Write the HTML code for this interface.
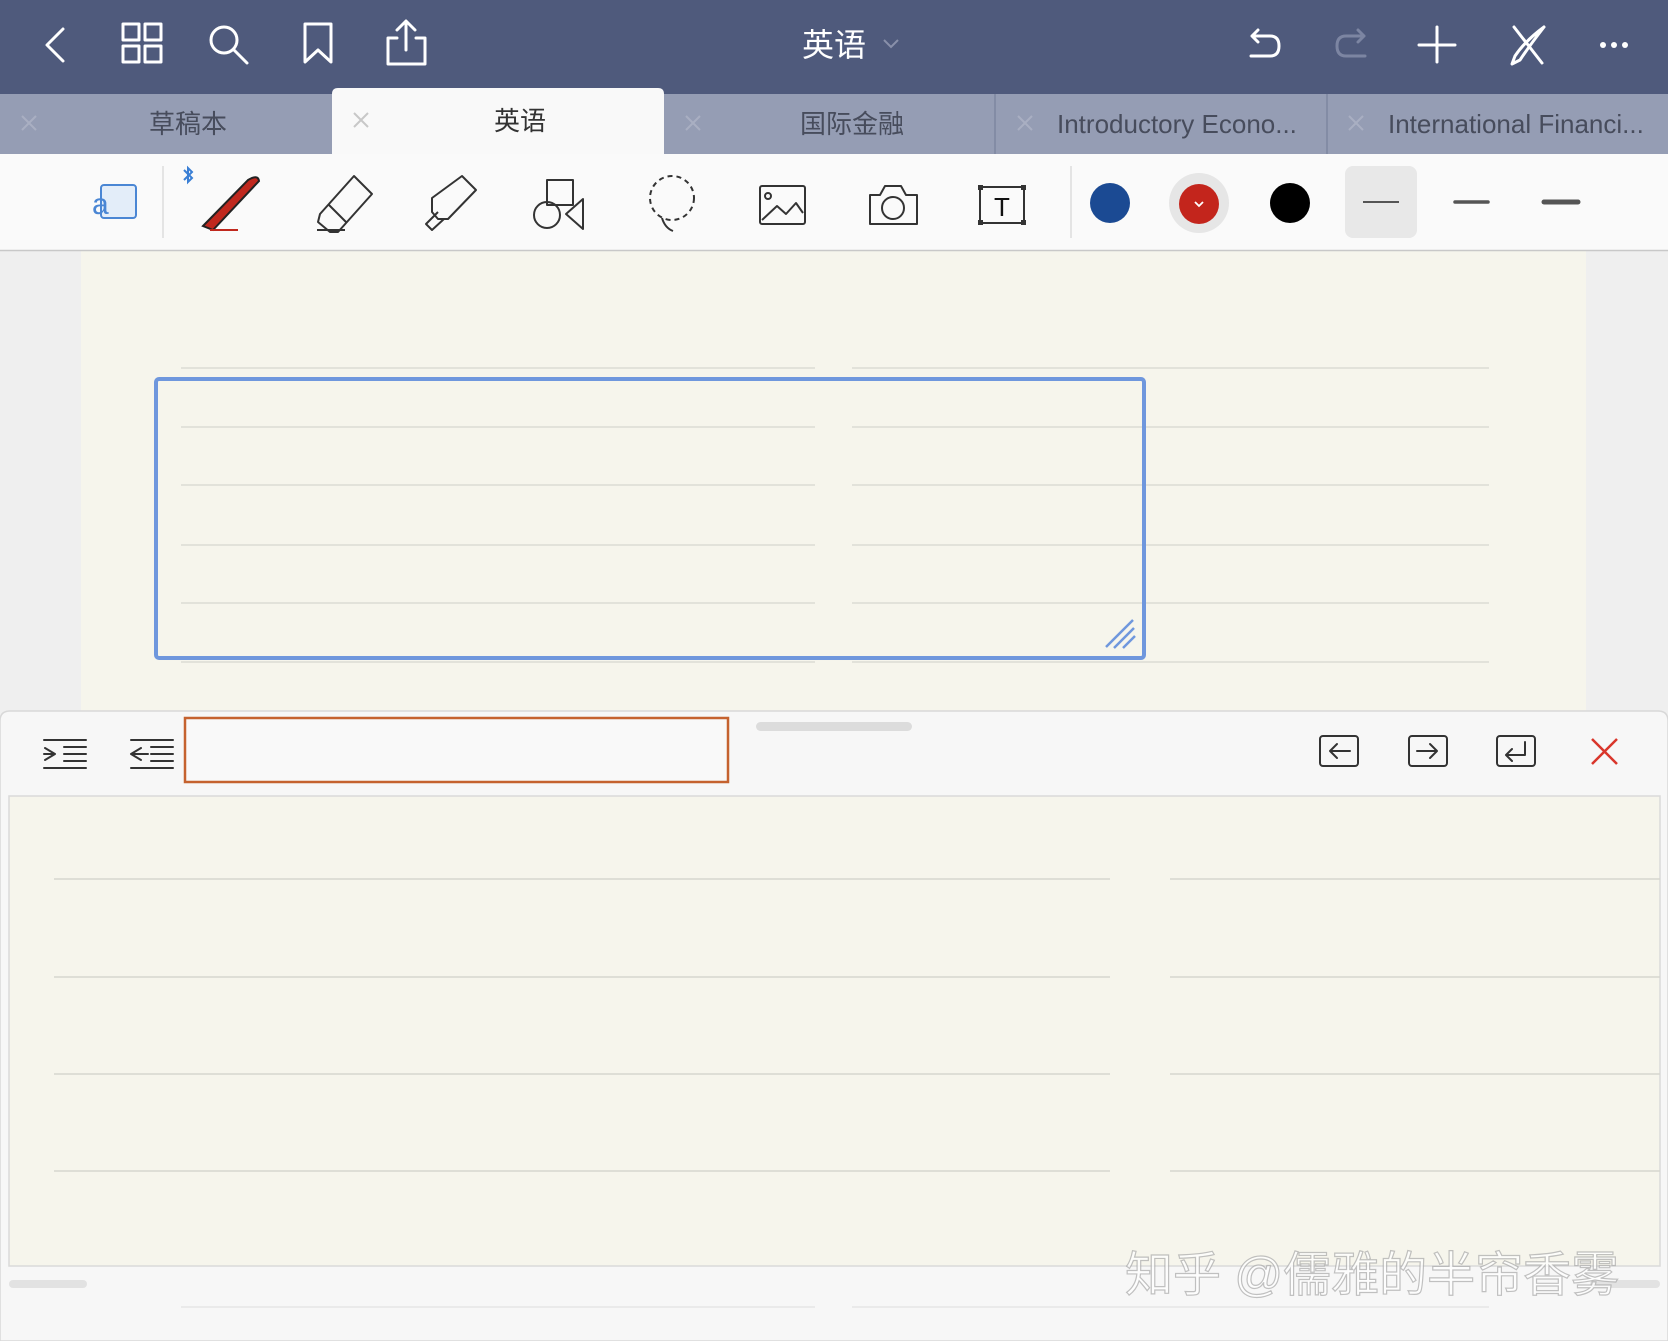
<!DOCTYPE html>
<html><head><meta charset="utf-8"><style>
body{margin:0;width:1668px;height:1341px;overflow:hidden;background:#efefef;font-family:"Liberation Sans","Noto Sans CJK SC",sans-serif}
svg{position:absolute;left:0;top:0}
</style></head><body>
<svg width="1668" height="1341" viewBox="0 0 1668 1341" xmlns="http://www.w3.org/2000/svg" font-family="Liberation Sans, Noto Sans CJK SC, sans-serif">
<rect x="0" y="251" width="1668" height="1090" fill="#efefef"/>
<rect x="81" y="251" width="1505" height="470" fill="#f6f5ec"/>
<g stroke="#dcdcd4" stroke-width="1.5">
<line x1="181" y1="368" x2="815" y2="368"/><line x1="852" y1="368" x2="1489" y2="368"/>
<line x1="181" y1="427" x2="815" y2="427"/><line x1="852" y1="427" x2="1489" y2="427"/>
<line x1="181" y1="485" x2="815" y2="485"/><line x1="852" y1="485" x2="1489" y2="485"/>
<line x1="181" y1="545" x2="815" y2="545"/><line x1="852" y1="545" x2="1489" y2="545"/>
<line x1="181" y1="603" x2="815" y2="603"/><line x1="852" y1="603" x2="1489" y2="603"/>
<line x1="181" y1="662" x2="815" y2="662"/><line x1="852" y1="662" x2="1489" y2="662"/>
</g>
<rect x="156" y="379" width="988" height="279" rx="3" fill="none" stroke="#6f97dd" stroke-width="4"/>
<g stroke="#6f97dd" stroke-width="2.5"><line x1="1106" y1="647" x2="1133" y2="620"/><line x1="1114" y1="648" x2="1134" y2="628"/><line x1="1123" y1="648" x2="1135" y2="636"/></g>

<rect x="0" y="0" width="1668" height="94" fill="#4f5a7c"/>
<g fill="none" stroke="#fff" stroke-width="3" stroke-linecap="round" stroke-linejoin="round">
<path d="M63 29 L47 45 L63 61"/>
<rect x="123" y="24" width="16" height="16"/><rect x="145" y="24" width="16" height="16"/><rect x="123" y="46" width="16" height="16"/><rect x="145" y="46" width="16" height="16"/>
<circle cx="224" cy="40" r="13"/><line x1="234" y1="50" x2="247" y2="63"/>
<path d="M305 24 H331 V62 L318 50 L305 62 Z"/>
<path d="M397 38 H388 V64 H425 V38 H416 M406 22 V50 M397 30 L406 21 L415 30"/>
<path d="M1252 36 H1270 Q1279 36 1279 46 Q1279 56 1270 56 H1251 M1258 30 L1252 36 L1258 42"/>
<path d="M1437 27 V62 M1419 45 H1455"/>
<path d="M1514 27 L1542 63 M1544 27 Q1530 45 1520 60 L1512 64 L1515 56 Q1525 41 1544 27"/>
</g>
<path d="M1364 36 H1346 Q1337 36 1337 46 Q1337 56 1346 56 H1365 M1358 30 L1364 36 L1358 42" fill="none" stroke="#7c85a2" stroke-width="3" stroke-linecap="round" stroke-linejoin="round"/>
<g fill="#fff"><circle cx="1603" cy="45" r="3"/><circle cx="1614" cy="45" r="3"/><circle cx="1625" cy="45" r="3"/></g>
<text x="834" y="56" font-size="32" fill="#fff" text-anchor="middle">英语</text>
<path d="M884 40 L891 47 L898 40" fill="none" stroke="#8990aa" stroke-width="2"/>

<rect x="0" y="94" width="1668" height="60" fill="#959db4"/>
<line x1="995" y1="94" x2="995" y2="154" stroke="#7d86a0" stroke-width="1.5"/>
<line x1="1327" y1="94" x2="1327" y2="154" stroke="#7d86a0" stroke-width="1.5"/>
<path d="M332 154 V94 Q332 88 338 88 H658 Q664 88 664 94 V154 Z" fill="#f9f9f9"/>
<g stroke="#a9afc2" stroke-width="2"><path d="M22 116 L36 130 M36 116 L22 130"/><path d="M686 116 L700 130 M700 116 L686 130"/><path d="M1018 116 L1032 130 M1032 116 L1018 130"/><path d="M1349 116 L1363 130 M1363 116 L1349 130"/></g>
<path d="M354 113 L368 127 M368 113 L354 127" stroke="#c8c8c8" stroke-width="2"/>
<g font-size="26" fill="#474c5c">
<text x="188" y="133" text-anchor="middle">草稿本</text>
<text x="520" y="130" text-anchor="middle" fill="#333">英语</text>
<text x="852" y="133" text-anchor="middle">国际金融</text>
<text x="1057" y="133">Introductory Econo...</text>
<text x="1388" y="133">International Financi...</text>
</g>

<rect x="0" y="154" width="1668" height="97" fill="#fafafa"/>
<line x1="0" y1="250.5" x2="1668" y2="250.5" stroke="#c8c8c8" stroke-width="1.5"/>
<line x1="163" y1="166" x2="163" y2="238" stroke="#ddd" stroke-width="1.5"/>
<line x1="1071" y1="166" x2="1071" y2="238" stroke="#ddd" stroke-width="1.5"/>
<rect x="101" y="185" width="35" height="33" rx="3" fill="#e3edf9" stroke="#4a86d4" stroke-width="2"/>
<text x="92" y="214" font-size="30" fill="#4a86d4">a</text>
<path d="M184 170 L192 178 L188 182 V168 L192 172 L184 180" fill="none" stroke="#3a7fd5" stroke-width="2"/>
<path d="M203 226 L248 180 Q258 174 259 181 L213 230 Z" fill="#c0281e" stroke="#222" stroke-width="2"/>
<line x1="210" y1="230" x2="238" y2="230" stroke="#c0281e" stroke-width="2"/>
<g fill="none" stroke="#333" stroke-width="2" stroke-linejoin="round">
<path d="M320 214 L354 176 L372 194 L338 232 H330 L318 222 Z M328 204 L346 222"/><line x1="317" y1="230" x2="345" y2="230"/>
<path d="M432 198 L462 176 L476 190 L448 219 L438 219 L432 212 Z M438 212 L426 224 L432 230 L444 219"/>
<rect x="547" y="180" width="26" height="25"/><circle cx="547" cy="215" r="13"/><path d="M583 199 V229 L566 214 Z"/>
<circle cx="672" cy="198" r="22" stroke-dasharray="5 4"/><path d="M662 218 Q665 228 673 231"/>
<rect x="760" y="186" width="45" height="38" rx="2"/><circle cx="768" cy="196" r="3"/><path d="M762 220 L777 206 L786 214 L796 203 L803 213"/>
<path d="M870 195 H880 L885 186 H901 L906 195 H917 V224 H870 Z"/><circle cx="893" cy="208" r="11"/>
<rect x="980" y="187" width="44" height="36"/>
</g>
<g fill="#333"><rect x="978" y="185" width="5" height="5"/><rect x="1021" y="185" width="5" height="5"/><rect x="978" y="220" width="5" height="5"/><rect x="1021" y="220" width="5" height="5"/></g>
<text x="1002" y="216" font-size="26" fill="#111" text-anchor="middle">T</text>
<circle cx="1110" cy="203" r="20" fill="#1b4a93"/>
<circle cx="1199" cy="203" r="30" fill="#e6e6e6"/><circle cx="1199" cy="204" r="20" fill="#c3251c"/>
<path d="M1195 202 L1199 206 L1203 202" fill="none" stroke="#fff" stroke-width="1.8"/>
<circle cx="1290" cy="203" r="20" fill="#000"/>
<rect x="1345" y="166" width="72" height="72" rx="8" fill="#e8e8e8"/>
<line x1="1363" y1="202" x2="1399" y2="202" stroke="#555" stroke-width="2"/>
<line x1="1455" y1="202" x2="1488" y2="202" stroke="#555" stroke-width="3.5" stroke-linecap="round"/>
<line x1="1544" y1="202" x2="1578" y2="202" stroke="#555" stroke-width="5" stroke-linecap="round"/>

<path d="M0 1341 V721 Q0 711 10 711 H1658 Q1668 711 1668 721 V1341 Z" fill="#f7f7f7" stroke="#d8d8d8" stroke-width="1.5"/>
<rect x="756" y="722" width="156" height="9" rx="4.5" fill="#dcdcdc"/>
<rect x="185" y="718" width="543" height="64" fill="#f9f9f9" stroke="#c5622f" stroke-width="2.5"/>
<g fill="none" stroke="#333" stroke-width="2" stroke-linejoin="round" stroke-linecap="round">
<path d="M44 740 H86 M64 747 H86 M64 754 H86 M64 761 H86 M44 768 H86 M45 748 L55 754 L45 760 M44 754 H55"/>
<path d="M131 740 H173 M151 747 H173 M151 754 H173 M151 761 H173 M131 768 H173 M141 748 L131 754 L141 760 M131 754 H148"/>
<rect x="1320" y="736" width="38" height="30" rx="3"/><path d="M1330 751 H1350 M1337 744 L1330 751 L1337 758"/>
<rect x="1409" y="736" width="38" height="30" rx="3"/><path d="M1417 751 H1437 M1430 744 L1437 751 L1430 758"/>
<rect x="1497" y="736" width="38" height="30" rx="3"/><path d="M1525 742 V755 H1506 M1512 749 L1506 755 L1512 761"/>
</g>
<path d="M1592 739 L1617 764 M1617 739 L1592 764" stroke="#d9362b" stroke-width="2.5"/>
<rect x="9" y="796" width="1651" height="470" fill="#f6f5ec" stroke="#dadada" stroke-width="1.5"/>
<g stroke="#d6d6ce" stroke-width="1.5">
<line x1="54" y1="879" x2="1110" y2="879"/><line x1="1170" y1="879" x2="1660" y2="879"/>
<line x1="54" y1="977" x2="1110" y2="977"/><line x1="1170" y1="977" x2="1660" y2="977"/>
<line x1="54" y1="1074" x2="1110" y2="1074"/><line x1="1170" y1="1074" x2="1660" y2="1074"/>
<line x1="54" y1="1171" x2="1110" y2="1171"/><line x1="1170" y1="1171" x2="1660" y2="1171"/>
</g>
<line x1="181" y1="1307" x2="815" y2="1307" stroke="#e6e6e6" stroke-width="1.5"/>
<line x1="852" y1="1307" x2="1489" y2="1307" stroke="#e6e6e6" stroke-width="1.5"/>
<rect x="9" y="1280" width="78" height="8" rx="4" fill="#e2e2e2"/>
<rect x="1590" y="1280" width="70" height="8" rx="4" fill="#e2e2e2"/>
<text x="1125" y="1291" font-size="48" fill="#fff" fill-opacity="0.75" stroke="#9a9a9a" stroke-width="1.2" stroke-opacity="0.6">知乎 @儒雅的半帘香雾</text>
</svg>
</body></html>
